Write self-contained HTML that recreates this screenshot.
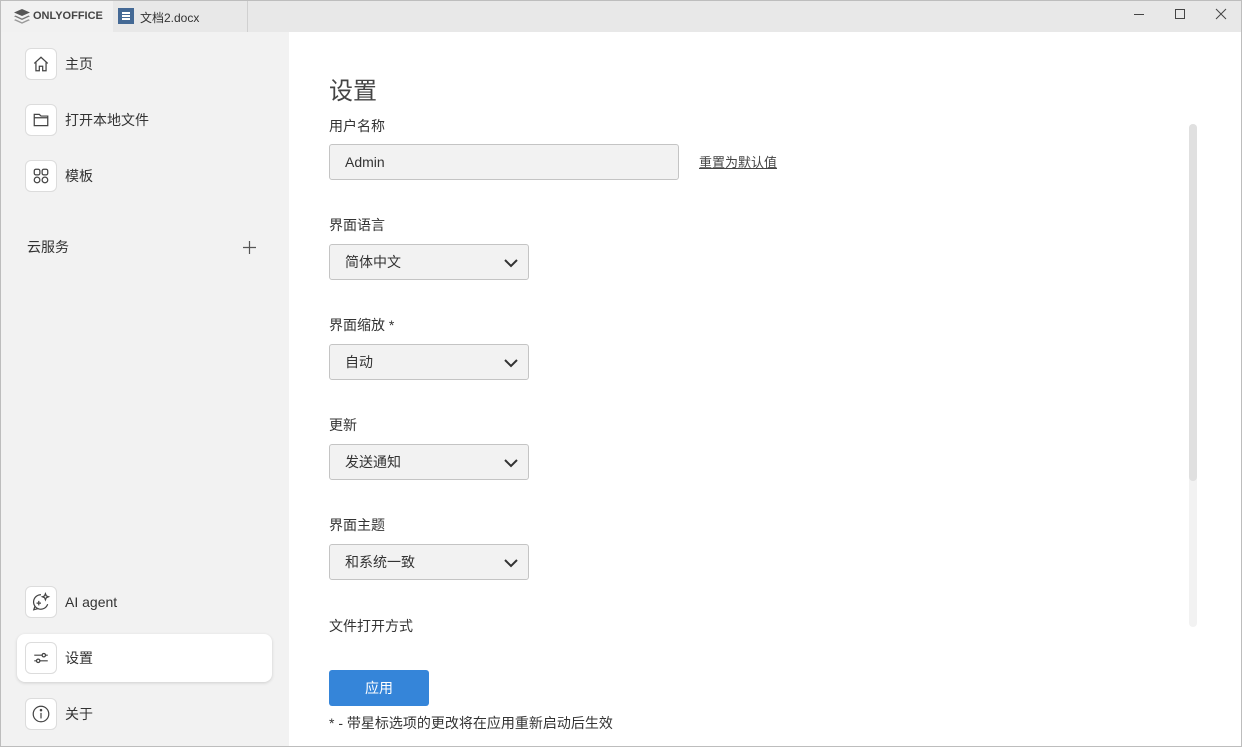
<!DOCTYPE html>
<html><head><meta charset="utf-8"><style>
*{box-sizing:border-box;margin:0;padding:0}
body{width:1242px;height:747px;overflow:hidden;font-family:"Liberation Sans","Noto Sans CJK SC",sans-serif;color:#333;background:#fff;position:relative;font-size:14px}
.frame{position:absolute;inset:0;border:1px solid #bdbdbd;pointer-events:none;z-index:10}
.title{position:absolute;left:0;top:0;width:1242px;height:32px;background:#e8e8e8}
.logoarea{position:absolute;left:0;top:0;width:113px;height:32px;background:#f1f1f1}
.tab{position:absolute;left:113px;top:0;width:135px;height:32px;background:#e8e8e8;border-right:1px solid #d0d0d0}
.side{position:absolute;left:0;top:32px;width:289px;height:715px;background:#f2f2f2}
.item{position:absolute;left:25px;display:flex;align-items:center;font-size:14px;color:#333}
.ic{width:32px;height:32px;border:1px solid #dcdcdc;border-radius:6px;background:#fff;display:flex;align-items:center;justify-content:center;margin-right:8px}
.sel{position:absolute;left:17px;top:634px;width:255px;height:48px;background:#fff;border-radius:8px;box-shadow:0 1px 3px rgba(0,0,0,.15)}
.lbl{position:absolute;left:329px;font-size:14px;color:#333}
.sel-box{position:absolute;left:329px;width:200px;height:36px;background:#f2f2f2;border:1px solid #c4c4c4;border-radius:3px;font-size:14px;padding:0 15px;line-height:34px}
.sel-box svg{position:absolute;right:10px;top:11px}
</style></head><body>
<div class="title"></div>
<div class="logoarea">
<svg style="position:absolute;left:14px;top:9px" width="16" height="15" viewBox="0 0 16 15"><path d="M8 0L16 3.5 8 7 0 3.5z" fill="#555"/><path d="M1.5 6.5L8 9.5 14.5 6.5 16 7.3 8 11 0 7.3z" fill="#777"/><path d="M1.5 10.3L8 13.3 14.5 10.3 16 11.1 8 14.8 0 11.1z" fill="#999"/></svg>
<span style="position:absolute;left:33px;top:10px;font-size:11px;font-weight:bold;color:#444">ONLYOFFICE</span></div>
<div class="tab"><div style="position:absolute;left:5px;top:8px;width:16px;height:16px;background:#446995"><div style="position:absolute;left:4px;top:4px;width:8px;height:1.5px;background:#fff;box-shadow:0 3px 0 #fff,0 6px 0 #fff"></div></div>
<span style="position:absolute;left:27px;top:9px;font-size:12px;color:#333">文档2.docx</span></div>
<div style="position:absolute;left:1134px;top:14px;width:10px;height:1px;background:#444"></div>
<div style="position:absolute;left:1175px;top:9px;width:10px;height:10px;border:1px solid #444"></div>
<svg style="position:absolute;left:1215px;top:8px" width="12" height="12"><path d="M1 1L11 11M11 1L1 11" stroke="#444" stroke-width="1"/></svg>

<div class="side"></div>
<div class="item" style="top:48px"><div class="ic"><svg width="18" height="18" viewBox="0 0 16 16" fill="none" stroke="#444" stroke-width="1.1"><path d="M2 7.5L8 2l6 5.5M3.5 6.5V14h3v-4h3v4h3V6.5"/></svg></div>主页</div>
<div class="item" style="top:104px"><div class="ic"><svg width="18" height="18" viewBox="0 0 16 16" fill="none" stroke="#444" stroke-width="1.1"><path d="M2 3h4.5l1.5 1.5h6V13H2zM2 6h12"/></svg></div>打开本地文件</div>
<div class="item" style="top:160px"><div class="ic"><svg width="18" height="18" viewBox="0 0 16 16" fill="none" stroke="#444" stroke-width="1.1"><rect x="2" y="2" width="5" height="5" rx="1.5"/><rect x="9" y="2" width="5" height="5" rx="1.5"/><rect x="2" y="9" width="5" height="5" rx="2.5"/><rect x="9" y="9" width="5" height="5" rx="2.5"/></svg></div>模板</div>
<div style="position:absolute;left:27px;top:237px;font-size:14px;color:#333">云服务</div>
<svg style="position:absolute;left:243px;top:241px" width="13" height="13"><path d="M6.5 0v13M0 6.5h13" stroke="#555" stroke-width="1.2"/></svg>
<div class="sel"></div>
<div class="item" style="top:586px"><div class="ic"><svg width="20" height="20" viewBox="0 0 18 18" fill="none" stroke="#444" stroke-width="1.1"><path d="M9 2.5A6.5 6.5 0 1 0 15 11M3.5 13L2.5 16 6 15"/><path d="M7 8v4M5 10h4"/><path d="M13 1.5l.8 2 2 .8-2 .8-.8 2-.8-2-2-.8 2-.8z"/></svg></div>AI agent</div>
<div class="item" style="top:642px"><div class="ic"><svg width="18" height="18" viewBox="0 0 16 16" fill="none" stroke="#444" stroke-width="1.1"><path d="M2 5.5h7M12 5.5h2M2 10.5h2M7 10.5h7"/><circle cx="10.5" cy="5.5" r="1.5"/><circle cx="5.5" cy="10.5" r="1.5"/></svg></div>设置</div>
<div class="item" style="top:698px"><div class="ic"><svg width="20" height="20" viewBox="0 0 18 18" fill="none" stroke="#444" stroke-width="1.1"><circle cx="9" cy="9" r="7"/><path d="M9 8v5"/><circle cx="9" cy="5.5" r=".6" fill="#444"/></svg></div>关于</div>

<div style="position:absolute;left:329px;top:71px;font-size:24px;color:#444">设置</div>
<div class="lbl" style="top:116px">用户名称</div>
<div class="sel-box" style="top:144px;width:350px">Admin</div>
<div style="position:absolute;left:699px;top:152px;font-size:13px;color:#444;text-decoration:underline">重置为默认值</div>
<div class="lbl" style="top:215px">界面语言</div>
<div class="sel-box" style="top:244px">简体中文<svg width="14" height="14"><path d="M1 4l6 6 6-6" fill="none" stroke="#333" stroke-width="2"/></svg></div>
<div class="lbl" style="top:315px">界面缩放 *</div>
<div class="sel-box" style="top:344px">自动<svg width="14" height="14"><path d="M1 4l6 6 6-6" fill="none" stroke="#333" stroke-width="2"/></svg></div>
<div class="lbl" style="top:415px">更新</div>
<div class="sel-box" style="top:444px">发送通知<svg width="14" height="14"><path d="M1 4l6 6 6-6" fill="none" stroke="#333" stroke-width="2"/></svg></div>
<div class="lbl" style="top:515px">界面主题</div>
<div class="sel-box" style="top:544px">和系统一致<svg width="14" height="14"><path d="M1 4l6 6 6-6" fill="none" stroke="#333" stroke-width="2"/></svg></div>
<div class="lbl" style="top:616px">文件打开方式</div>
<div style="position:absolute;left:329px;top:670px;width:100px;height:36px;background:#3585d9;border-radius:3px;color:#fff;text-align:center;line-height:36px;font-size:14px">应用</div>
<div class="lbl" style="top:713px">* - 带星标选项的更改将在应用重新启动后生效</div>
<div style="position:absolute;left:1189px;top:124px;width:8px;height:503px;background:#f2f2f2;border-radius:4px"></div>
<div style="position:absolute;left:1189px;top:124px;width:8px;height:357px;background:#e0e0e0;border-radius:4px"></div>
<div class="frame"></div>
</body></html>
